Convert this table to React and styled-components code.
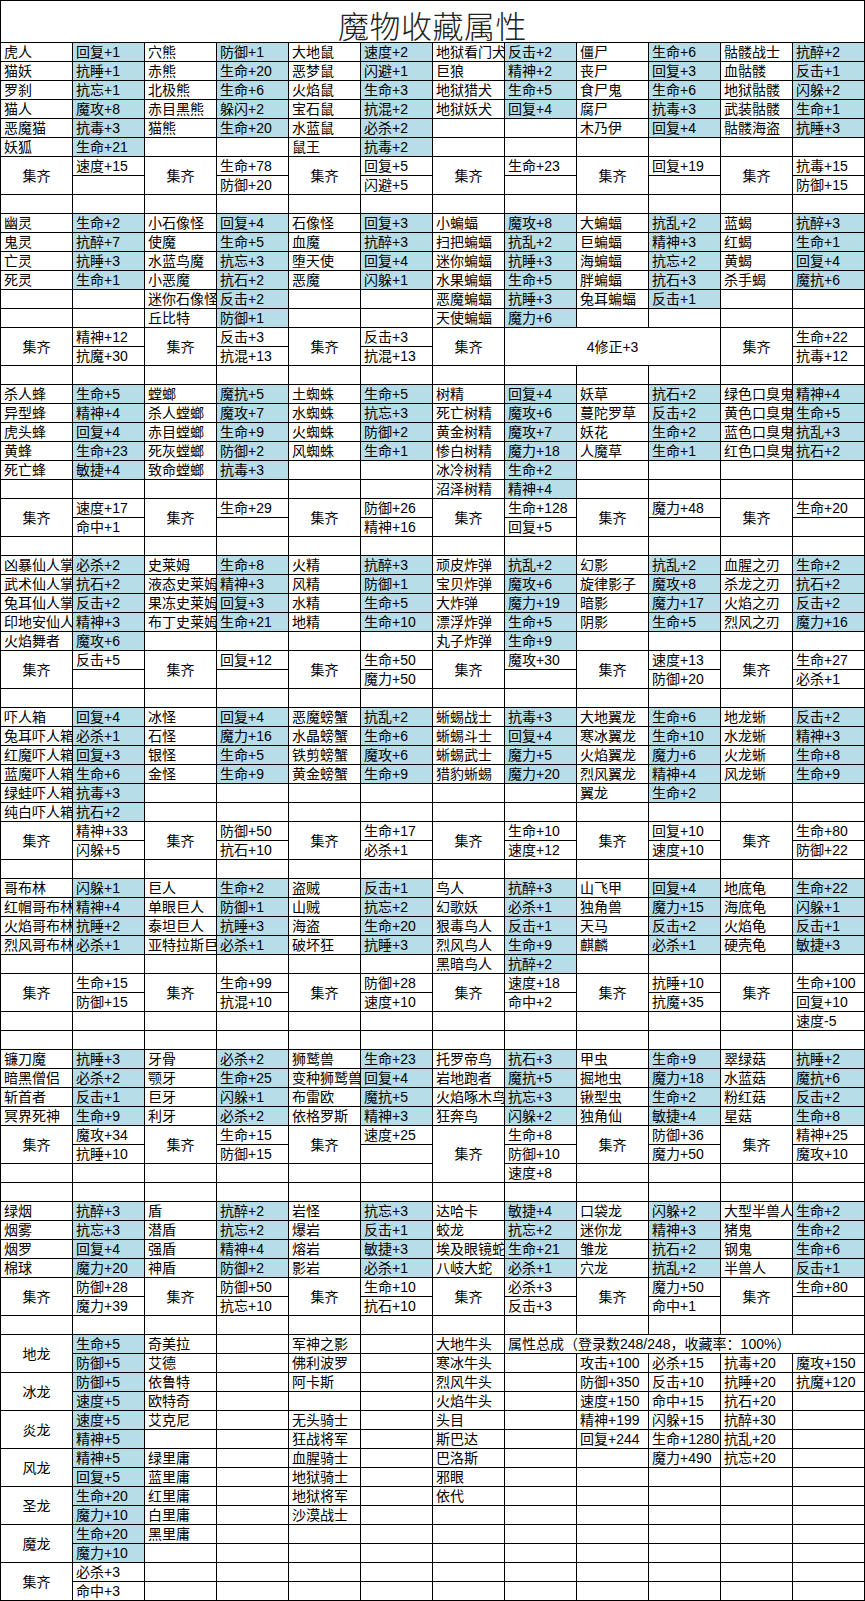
import React from 'react';
import styled, { createGlobalStyle } from 'styled-components';

const Global = createGlobalStyle`
  html, body { margin: 0; padding: 0; background: #fff; }
  body { font-family: "Liberation Sans", "Noto Sans CJK SC", sans-serif; }
`;

const Sheet = styled.div`
  display: grid;
  grid-template-columns: repeat(12, 71px);
  grid-template-rows: 41px;
  grid-auto-rows: 18px;
  gap: 1px;
  padding: 1px;
  background: #000;
  width: max-content;
`;

const Title = styled.div`
  grid-column: 1 / -1;
  background: #fff;
  display: flex;
  align-items: center;
  justify-content: center;
  padding-top: 5px;
  box-sizing: border-box;
  font-family: "Noto Sans CJK SC", sans-serif;
  font-size: 31px;
  font-weight: 300;
  color: #222;
  letter-spacing: 0.5px;
`;

const Cell = styled.div`
  grid-row: span ${(p) => p.$rs || 1};
  grid-column: span ${(p) => p.$cs || 1};
  background: ${(p) => (p.$tone === 'bonus' ? '#b7dde8' : '#fff')};
  display: flex;
  align-items: center;
  justify-content: ${(p) => (p.$tone === 'center' ? 'center' : 'flex-start')};
  padding-left: ${(p) => (p.$tone === 'center' ? '0' : '3px')};
  overflow: hidden;
  white-space: nowrap;
  font-size: 14px;
  line-height: 18px;
  color: #000;
`;

const N = (t = '') => ({ t, k: 'name' });
const B = (t = '') => ({ t, k: t ? 'bonus' : 'name' });
const C = (t, rs = 2, cs = 1) => ({ t, k: 'center', rs, cs });
const E = (n) => Array.from({ length: n }, () => N(''));

const mRow = (a) => a.map((t, i) => (i % 2 === 0 ? N(t) : B(t)));
const mRows = (rows) => rows.flatMap(mRow);
const setRows = (sets) => [
  ...sets.flatMap(([x]) => [C('集齐'), N(x)]),
  ...sets.map(([, y]) => N(y)),
];

const cells = [
  // Section 1
  ...mRows([
    ['虎人', '回复+1', '穴熊', '防御+1', '大地鼠', '速度+2', '地狱看门犬', '反击+2', '僵尸', '生命+6', '骷髅战士', '抗醉+2'],
    ['猫妖', '抗睡+1', '赤熊', '生命+20', '恶梦鼠', '闪避+1', '巨狼', '精神+2', '丧尸', '回复+3', '血骷髅', '反击+1'],
    ['罗刹', '抗忘+1', '北极熊', '生命+6', '火焰鼠', '生命+3', '地狱猎犬', '生命+5', '食尸鬼', '生命+6', '地狱骷髅', '闪躲+2'],
    ['猫人', '魔攻+8', '赤目黑熊', '躲闪+2', '宝石鼠', '抗混+2', '地狱妖犬', '回复+4', '腐尸', '抗毒+3', '武装骷髅', '生命+1'],
    ['恶魔猫', '抗毒+3', '猫熊', '生命+20', '水蓝鼠', '必杀+2', '', '', '木乃伊', '回复+4', '骷髅海盗', '抗睡+3'],
    ['妖狐', '生命+21', '', '', '鼠王', '抗毒+2', '', '', '', '', '', ''],
  ]),
  ...setRows([['速度+15', ''], ['生命+78', '防御+20'], ['回复+5', '闪避+5'], ['生命+23', ''], ['回复+19', ''], ['抗毒+15', '防御+15']]),
  ...E(12),
  // Section 2
  ...mRows([
    ['幽灵', '生命+2', '小石像怪', '回复+4', '石像怪', '回复+3', '小蝙蝠', '魔攻+8', '大蝙蝠', '抗乱+2', '蓝蝎', '抗醉+3'],
    ['鬼灵', '抗醉+7', '使魔', '生命+5', '血魔', '抗醉+3', '扫把蝙蝠', '抗乱+2', '巨蝙蝠', '精神+3', '红蝎', '生命+1'],
    ['亡灵', '抗睡+3', '水蓝鸟魔', '抗忘+3', '堕天使', '回复+4', '迷你蝙蝠', '抗睡+3', '海蝙蝠', '抗忘+2', '黄蝎', '回复+4'],
    ['死灵', '生命+1', '小恶魔', '抗石+2', '恶魔', '闪躲+1', '水果蝙蝠', '生命+5', '胖蝙蝠', '抗石+3', '杀手蝎', '魔抗+6'],
    ['', '', '迷你石像怪', '反击+2', '', '', '恶魔蝙蝠', '抗睡+3', '兔耳蝙蝠', '反击+1', '', ''],
    ['', '', '丘比特', '防御+1', '', '', '天使蝙蝠', '魔力+6', '', '', '', ''],
  ]),
  C('集齐'), N('精神+12'), C('集齐'), N('反击+3'), C('集齐'), N('反击+3'),
  C('集齐'), C('4修正+3', 2, 3), C('集齐'), N('生命+22'),
  N('抗魔+30'), N('抗混+13'), N('抗混+13'), N('抗毒+12'),
  ...E(12),
  // Section 3
  ...mRows([
    ['杀人蜂', '生命+5', '螳螂', '魔抗+5', '土蜘蛛', '生命+5', '树精', '回复+4', '妖草', '抗石+2', '绿色口臭鬼', '精神+4'],
    ['异型蜂', '精神+4', '杀人螳螂', '魔攻+7', '水蜘蛛', '抗忘+3', '死亡树精', '魔攻+6', '蔓陀罗草', '反击+2', '黄色口臭鬼', '生命+5'],
    ['虎头蜂', '回复+4', '赤目螳螂', '生命+9', '火蜘蛛', '防御+2', '黄金树精', '魔攻+7', '妖花', '生命+2', '蓝色口臭鬼', '抗乱+3'],
    ['黄蜂', '生命+23', '死灰螳螂', '防御+2', '风蜘蛛', '生命+1', '惨白树精', '魔力+18', '人魔草', '生命+1', '红色口臭鬼', '抗石+2'],
    ['死亡蜂', '敏捷+4', '致命螳螂', '抗毒+3', '', '', '冰冷树精', '生命+2', '', '', '', ''],
    ['', '', '', '', '', '', '沼泽树精', '精神+4', '', '', '', ''],
  ]),
  ...setRows([['速度+17', '命中+1'], ['生命+29', ''], ['防御+26', '精神+16'], ['生命+128', '回复+5'], ['魔力+48', ''], ['生命+20', '']]),
  ...E(12),
  // Section 4
  ...mRows([
    ['凶暴仙人掌', '必杀+2', '史莱姆', '生命+8', '火精', '抗醉+3', '顽皮炸弹', '抗乱+2', '幻影', '抗乱+2', '血腥之刃', '生命+2'],
    ['武术仙人掌', '抗石+2', '液态史莱姆', '精神+3', '风精', '防御+1', '宝贝炸弹', '魔攻+6', '旋律影子', '魔攻+8', '杀龙之刃', '抗石+2'],
    ['兔耳仙人掌', '反击+2', '果冻史莱姆', '回复+3', '水精', '生命+5', '大炸弹', '魔力+19', '暗影', '魔力+17', '火焰之刃', '反击+2'],
    ['印地安仙人掌', '精神+3', '布丁史莱姆', '生命+21', '地精', '生命+10', '漂浮炸弹', '生命+5', '阴影', '生命+5', '烈风之刃', '魔力+16'],
    ['火焰舞者', '魔攻+6', '', '', '', '', '丸子炸弹', '生命+9', '', '', '', ''],
  ]),
  ...setRows([['反击+5', ''], ['回复+12', ''], ['生命+50', '魔力+50'], ['魔攻+30', ''], ['速度+13', '防御+20'], ['生命+27', '必杀+1']]),
  ...E(12),
  // Section 5
  ...mRows([
    ['吓人箱', '回复+4', '冰怪', '回复+4', '恶魔螃蟹', '抗乱+2', '蜥蜴战士', '抗毒+3', '大地翼龙', '生命+6', '地龙蜥', '反击+2'],
    ['兔耳吓人箱', '必杀+1', '石怪', '魔力+16', '水晶螃蟹', '生命+6', '蜥蜴斗士', '回复+4', '寒冰翼龙', '生命+10', '水龙蜥', '精神+3'],
    ['红魔吓人箱', '回复+3', '银怪', '生命+5', '铁剪螃蟹', '魔攻+6', '蜥蜴武士', '魔力+5', '火焰翼龙', '魔力+6', '火龙蜥', '生命+8'],
    ['蓝魔吓人箱', '生命+6', '金怪', '生命+9', '黄金螃蟹', '生命+9', '猎豹蜥蜴', '魔力+20', '烈风翼龙', '精神+4', '风龙蜥', '生命+9'],
    ['绿蛙吓人箱', '抗毒+3', '', '', '', '', '', '', '翼龙', '生命+2', '', ''],
    ['纯白吓人箱', '抗石+2', '', '', '', '', '', '', '', '', '', ''],
  ]),
  ...setRows([['精神+33', '闪躲+5'], ['防御+50', '抗石+10'], ['生命+17', '必杀+1'], ['生命+10', '速度+12'], ['回复+10', '速度+10'], ['生命+80', '防御+22']]),
  ...E(12),
  // Section 6
  ...mRows([
    ['哥布林', '闪躲+1', '巨人', '生命+2', '盗贼', '反击+1', '鸟人', '抗醉+3', '山飞甲', '回复+4', '地底龟', '生命+22'],
    ['红帽哥布林', '精神+4', '单眼巨人', '防御+1', '山贼', '抗忘+2', '幻歌妖', '必杀+1', '独角兽', '魔力+15', '海底龟', '闪躲+1'],
    ['火焰哥布林', '抗睡+2', '泰坦巨人', '抗睡+3', '海盗', '生命+20', '狠毒鸟人', '反击+1', '天马', '反击+2', '火焰龟', '反击+1'],
    ['烈风哥布林', '必杀+1', '亚特拉斯巨人', '必杀+1', '破坏狂', '抗睡+3', '烈风鸟人', '生命+9', '麒麟', '必杀+1', '硬壳龟', '敏捷+3'],
    ['', '', '', '', '', '', '黑暗鸟人', '抗醉+2', '', '', '', ''],
  ]),
  ...setRows([['生命+15', '防御+15'], ['生命+99', '抗混+10'], ['防御+28', '速度+10'], ['速度+18', '命中+2'], ['抗睡+10', '抗魔+35'], ['生命+100', '回复+10']]),
  ...E(11), N('速度-5'),
  ...E(12),
  // Section 7
  ...mRows([
    ['镰刀魔', '抗睡+3', '牙骨', '必杀+2', '狮鹫兽', '生命+23', '托罗帝鸟', '抗石+3', '甲虫', '生命+9', '翠绿菇', '抗睡+2'],
    ['暗黑僧侣', '必杀+2', '颚牙', '生命+25', '变种狮鹫兽', '回复+4', '岩地跑者', '魔抗+5', '掘地虫', '魔力+18', '水蓝菇', '魔抗+6'],
    ['斩首者', '反击+1', '巨牙', '闪躲+1', '布雷欧', '魔抗+5', '火焰啄木鸟', '抗忘+3', '锹型虫', '生命+2', '粉红菇', '反击+2'],
    ['冥界死神', '生命+9', '利牙', '必杀+2', '依格罗斯', '精神+3', '狂奔鸟', '闪躲+2', '独角仙', '敏捷+4', '星菇', '生命+8'],
  ]),
  C('集齐'), N('魔攻+34'), C('集齐'), N('生命+15'), C('集齐'), N('速度+25'),
  C('集齐', 3), N('生命+8'), C('集齐'), N('防御+36'), C('集齐'), N('精神+25'),
  N('抗睡+10'), N('防御+15'), N(''), N('防御+10'), N('魔力+50'), N('魔攻+10'),
  ...E(6), N('速度+8'), ...E(4),
  ...E(12),
  // Section 8
  ...mRows([
    ['绿烟', '抗醉+3', '盾', '抗醉+2', '岩怪', '抗忘+3', '达哈卡', '敏捷+4', '口袋龙', '闪躲+2', '大型半兽人', '生命+2'],
    ['烟雾', '抗忘+3', '潜盾', '抗忘+2', '爆岩', '反击+1', '蛟龙', '抗忘+2', '迷你龙', '精神+3', '猪鬼', '生命+2'],
    ['烟罗', '回复+4', '强盾', '精神+4', '熔岩', '敏捷+3', '埃及眼镜蛇', '生命+21', '雏龙', '抗石+2', '钢鬼', '生命+6'],
    ['棉球', '魔力+20', '神盾', '防御+2', '影岩', '必杀+1', '八岐大蛇', '必杀+1', '穴龙', '抗乱+2', '半兽人', '反击+1'],
  ]),
  ...setRows([['防御+28', '魔力+39'], ['防御+50', '抗忘+10'], ['生命+10', '抗石+10'], ['必杀+3', '反击+3'], ['魔力+50', '命中+1'], ['生命+80', '']]),
  ...E(12),
  // Section 9
  C('地龙'), B('生命+5'), N('奇美拉'), N(''), N('军神之影'), N(''), N('大地牛头'),
  { t: '属性总成（登录数248/248，收藏率：100%）', k: 'name', cs: 5 },
  B('防御+5'), N('艾德'), N(''), N('佛利波罗'), N(''), N('寒冰牛头'), N(''), N('攻击+100'), N('必杀+15'), N('抗毒+20'), N('魔攻+150'),
  C('冰龙'), B('防御+5'), N('依鲁特'), N(''), N('阿卡斯'), N(''), N('烈风牛头'), N(''), N('防御+350'), N('反击+10'), N('抗睡+20'), N('抗魔+120'),
  B('速度+5'), N('欧特奇'), N(''), N(''), N(''), N('火焰牛头'), N(''), N('速度+150'), N('命中+15'), N('抗石+20'), N(''),
  C('炎龙'), B('速度+5'), N('艾克尼'), N(''), N('无头骑士'), N(''), N('头目'), N(''), N('精神+199'), N('闪躲+15'), N('抗醉+30'), N(''),
  B('精神+5'), N(''), N(''), N('狂战将军'), N(''), N('斯巴达'), N(''), N('回复+244'), N('生命+1280'), N('抗乱+20'), N(''),
  C('风龙'), B('精神+5'), N('绿里庸'), N(''), N('血腥骑士'), N(''), N('巴洛斯'), N(''), N(''), N('魔力+490'), N('抗忘+20'), N(''),
  B('回复+5'), N('蓝里庸'), N(''), N('地狱骑士'), N(''), N('邪眼'), ...E(5),
  C('圣龙'), B('生命+20'), N('红里庸'), N(''), N('地狱将军'), N(''), N('依代'), ...E(5),
  B('魔力+10'), N('白里庸'), N(''), N('沙漠战士'), ...E(7),
  C('魔龙'), B('生命+20'), N('黑里庸'), ...E(9),
  B('魔力+10'), ...E(10),
  C('集齐'), N('必杀+3'), ...E(10),
  N('命中+3'), ...E(10),
];

export default function App() {
  return (
    <>
      <Global />
      <Sheet>
        <Title>魔物收藏属性</Title>
        {cells.map((c, i) => (
          <Cell key={i} $tone={c.k} $rs={c.rs} $cs={c.cs}>
            {c.t}
          </Cell>
        ))}
      </Sheet>
    </>
  );
}
